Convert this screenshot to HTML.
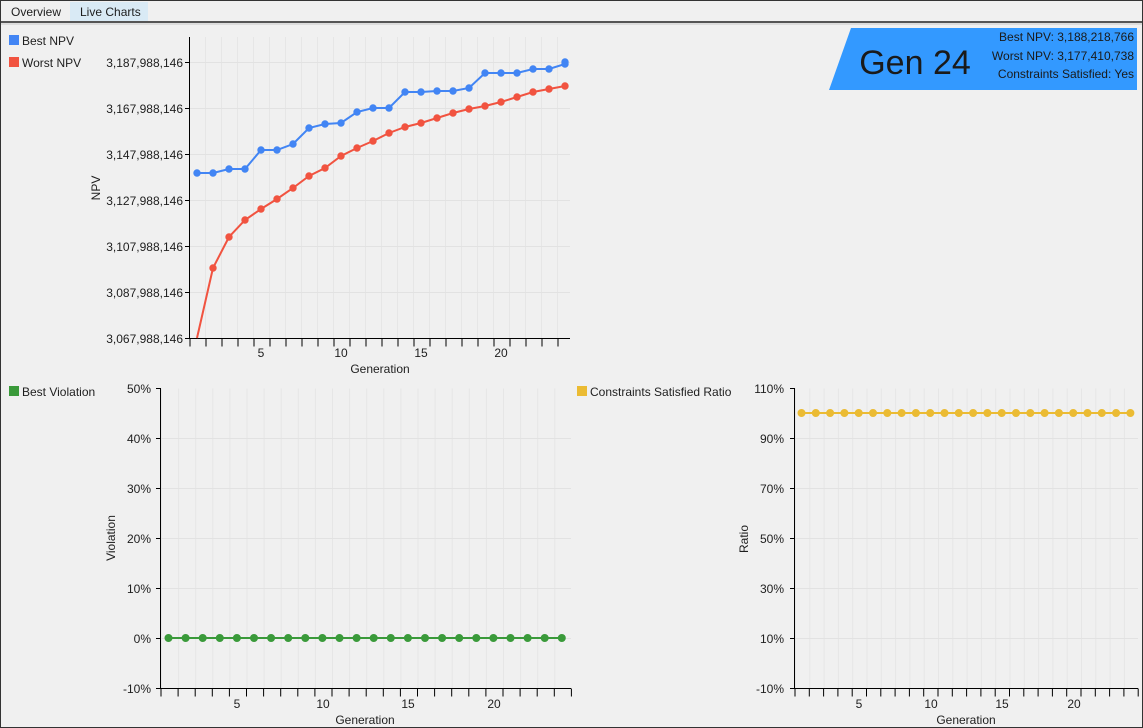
<!DOCTYPE html>
<html><head><meta charset="utf-8"><style>
html,body{margin:0;padding:0;}
body{width:1143px;height:728px;background:#f0f0f0;font-family:"Liberation Sans",sans-serif;overflow:hidden;position:relative;}
svg{position:absolute;left:0;top:0;}
</style></head><body>
<svg width="1143" height="728" viewBox="0 0 1143 728" font-family="Liberation Sans, sans-serif" font-size="12" fill="#1e1e1e">
<defs>
<marker id="mb" markerWidth="10" markerHeight="10" refX="5" refY="5" markerUnits="userSpaceOnUse"><circle cx="5" cy="5" r="3.7" fill="#4285f4"/></marker>
<marker id="mr" markerWidth="10" markerHeight="10" refX="5" refY="5" markerUnits="userSpaceOnUse"><circle cx="5" cy="5" r="3.7" fill="#f15340"/></marker>
</defs>
<rect x="0.5" y="0.5" width="1142" height="727" fill="none" stroke="#333"/>
<rect x="70" y="2" width="78" height="19" fill="#d9eaf5"/>
<text x="11" y="16">Overview</text>
<text x="80" y="16">Live Charts</text>
<rect x="1" y="21" width="1141" height="2" fill="#555"/>
<rect x="1" y="23" width="1141" height="2" fill="#dcdcdc"/>

<rect x="9" y="35" width="10" height="10" fill="#4285f4"/><text x="22" y="45">Best NPV</text>
<rect x="9" y="57" width="10" height="10" fill="#f15340"/><text x="22" y="67">Worst NPV</text>

<polygon points="851,28 1137,28 1137,90 829,90" fill="#3399ff"/>
<text x="915" y="74" font-size="34" text-anchor="middle" fill="#1a1a1a">Gen 24</text>
<g font-size="12" text-anchor="end" fill="#1a1a1a">
<text x="1134" y="41">Best NPV: 3,188,218,766</text>
<text x="1134" y="60">Worst NPV: 3,177,410,738</text>
<text x="1134" y="78">Constraints Satisfied: Yes</text>
</g>

<g stroke="#e2e2e2" stroke-width="1">
<line x1="189" y1="187.5" x2="570" y2="187.5" stroke-width="301" stroke-dasharray="1 15" stroke-dashoffset="-16" stroke="#e6e6e6"/>
<line x1="189" y1="62.5" x2="570" y2="62.5"/><line x1="189" y1="108.5" x2="570" y2="108.5"/><line x1="189" y1="154.5" x2="570" y2="154.5"/><line x1="189" y1="200.5" x2="570" y2="200.5"/><line x1="189" y1="246.5" x2="570" y2="246.5"/><line x1="189" y1="292.5" x2="570" y2="292.5"/>
</g>
<g stroke="#000">
<line x1="189.5" y1="37" x2="189.5" y2="339"/>
<line x1="189" y1="338.5" x2="570" y2="338.5"/>
<line x1="189.5" y1="342.5" x2="571" y2="342.5" stroke-width="8" stroke-dasharray="1 15"/>
<line x1="185" y1="62.5" x2="189" y2="62.5"/><line x1="185" y1="108.5" x2="189" y2="108.5"/><line x1="185" y1="154.5" x2="189" y2="154.5"/><line x1="185" y1="200.5" x2="189" y2="200.5"/><line x1="185" y1="246.5" x2="189" y2="246.5"/><line x1="185" y1="292.5" x2="189" y2="292.5"/><line x1="185" y1="338.5" x2="189" y2="338.5"/>
</g>
<g text-anchor="end">
<text x="183" y="67">3,187,988,146</text><text x="183" y="113">3,167,988,146</text><text x="183" y="159">3,147,988,146</text><text x="183" y="205">3,127,988,146</text><text x="183" y="251">3,107,988,146</text><text x="183" y="297">3,087,988,146</text><text x="183" y="343">3,067,988,146</text>
</g>
<g text-anchor="middle">
<text x="261" y="357">5</text><text x="341" y="357">10</text><text x="421" y="357">15</text><text x="501" y="357">20</text>
<text x="380" y="373">Generation</text>
</g>
<text transform="translate(100,188) rotate(-90)" text-anchor="middle">NPV</text>
<polyline fill="none" stroke="#f15340" stroke-width="2" marker-mid="url(#mr)" marker-end="url(#mr)" points="197,338 213,268 229,237 245,220 261,209 277,199 293,188 309,176 325,168 341,156 357,148 373,141 389,133 405,127 421,123 437,118 453,113 469,109 485,106 501,102 517,97 533,92 549,89 565,86"/>
<polyline fill="none" stroke="#4285f4" stroke-width="2" marker-start="url(#mb)" marker-mid="url(#mb)" marker-end="url(#mb)" points="197,173 213,173 229,169 245,169 261,150 277,150 293,144 309,128 325,124 341,123 357,112 373,108 389,108 405,92 421,92 437,91 453,91 469,88 485,73 501,73 517,73 533,69 549,69 565,64 565,62"/>

<rect x="9" y="386" width="10" height="10" fill="#3a9a3a"/><text x="22" y="396">Best Violation</text>
<line x1="161" y1="538.5" x2="571" y2="538.5" stroke-width="300" stroke-dasharray="1 16.1" stroke-dashoffset="-17.1" stroke="#e6e6e6"/>
<g stroke="#e2e2e2">
<line x1="161" y1="438.5" x2="571" y2="438.5"/><line x1="161" y1="488.5" x2="571" y2="488.5"/><line x1="161" y1="538.5" x2="571" y2="538.5"/><line x1="161" y1="588.5" x2="571" y2="588.5"/><line x1="161" y1="638.5" x2="571" y2="638.5"/>
</g>
<g stroke="#000">
<line x1="160.5" y1="388" x2="160.5" y2="689"/>
<line x1="160" y1="688.5" x2="571" y2="688.5"/>
<line x1="160.5" y1="692.5" x2="572" y2="692.5" stroke-width="8" stroke-dasharray="1 16.1"/>
<line x1="156" y1="388.5" x2="160" y2="388.5"/><line x1="156" y1="438.5" x2="160" y2="438.5"/><line x1="156" y1="488.5" x2="160" y2="488.5"/><line x1="156" y1="538.5" x2="160" y2="538.5"/><line x1="156" y1="588.5" x2="160" y2="588.5"/><line x1="156" y1="638.5" x2="160" y2="638.5"/><line x1="156" y1="688.5" x2="160" y2="688.5"/>
</g>
<g text-anchor="end">
<text x="151" y="393">50%</text><text x="151" y="443">40%</text><text x="151" y="493">30%</text><text x="151" y="543">20%</text><text x="151" y="593">10%</text><text x="151" y="643">0%</text><text x="151" y="693">-10%</text>
</g>
<g text-anchor="middle">
<text x="237" y="708">5</text><text x="323" y="708">10</text><text x="408" y="708">15</text><text x="494" y="708">20</text>
<text x="365" y="724">Generation</text>
</g>
<text transform="translate(115,538) rotate(-90)" text-anchor="middle">Violation</text>
<line x1="168.5" y1="638" x2="562" y2="638" stroke="#3a9a3a" stroke-width="2"/>
<line x1="168.5" y1="638" x2="563" y2="638" stroke="#3a9a3a" stroke-width="8" stroke-linecap="round" stroke-dasharray="0 17.1"/>

<rect x="577" y="386" width="10" height="10" fill="#ebbb33"/><text x="590" y="396">Constraints Satisfied Ratio</text>
<line x1="795" y1="538.5" x2="1138" y2="538.5" stroke-width="300" stroke-dasharray="1 13.3" stroke-dashoffset="-14.3" stroke="#e6e6e6"/>
<g stroke="#e2e2e2">
<line x1="795" y1="438.5" x2="1138" y2="438.5"/><line x1="795" y1="488.5" x2="1138" y2="488.5"/><line x1="795" y1="538.5" x2="1138" y2="538.5"/><line x1="795" y1="588.5" x2="1138" y2="588.5"/><line x1="795" y1="638.5" x2="1138" y2="638.5"/>
</g>
<g stroke="#000">
<line x1="794.5" y1="388" x2="794.5" y2="689"/>
<line x1="794" y1="688.5" x2="1138" y2="688.5"/>
<line x1="794.5" y1="692.5" x2="1139" y2="692.5" stroke-width="8" stroke-dasharray="1 13.3"/>
<line x1="790" y1="388.5" x2="794" y2="388.5"/><line x1="790" y1="438.5" x2="794" y2="438.5"/><line x1="790" y1="488.5" x2="794" y2="488.5"/><line x1="790" y1="538.5" x2="794" y2="538.5"/><line x1="790" y1="588.5" x2="794" y2="588.5"/><line x1="790" y1="638.5" x2="794" y2="638.5"/><line x1="790" y1="688.5" x2="794" y2="688.5"/>
</g>
<g text-anchor="end">
<text x="784" y="393">110%</text><text x="784" y="443">90%</text><text x="784" y="493">70%</text><text x="784" y="543">50%</text><text x="784" y="593">30%</text><text x="784" y="643">10%</text><text x="784" y="693">-10%</text>
</g>
<g text-anchor="middle">
<text x="859" y="708">5</text><text x="931" y="708">10</text><text x="1002" y="708">15</text><text x="1074" y="708">20</text>
<text x="966" y="724">Generation</text>
</g>
<text transform="translate(748,539) rotate(-90)" text-anchor="middle">Ratio</text>
<line x1="801.5" y1="413" x2="1131" y2="413" stroke="#ebbb33" stroke-width="2"/>
<line x1="801.5" y1="413" x2="1133" y2="413" stroke="#ebbb33" stroke-width="8" stroke-linecap="round" stroke-dasharray="0 14.3"/>
</svg>
</body></html>
